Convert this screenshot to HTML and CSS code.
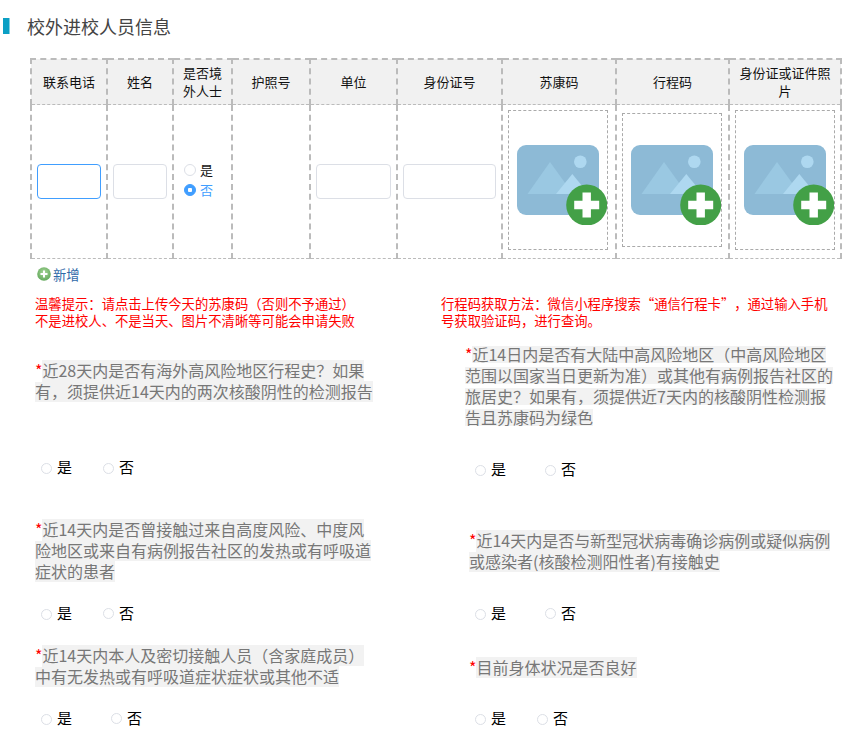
FILE: index.html
```html
<!DOCTYPE html>
<html lang="zh-CN">
<head>
<meta charset="utf-8">
<title>校外进校人员信息</title>
<link rel="stylesheet" href="styles.css">
</head>
<body>
<svg class="defs" width="0" height="0" aria-hidden="true">
  <symbol id="pic" viewBox="0 0 90 80">
    <rect x="0" y="0" width="82" height="70" rx="9" fill="#8dbad6"/>
    <path d="M10.5 49 33 17l23 32z" fill="#9ac8e2"/>
    <path d="M39 49l16.300-20L71.700 49z" fill="#aed8f0"/>
    <circle cx="63.300" cy="16.700" r="6.300" fill="#aed8f0"/>
    <circle cx="69.700" cy="60" r="20.500" fill="#43a047"/>
    <path d="M65.500 47.500h8.400v8.300h8.300v8.400h-8.300v8.300h-8.400v-8.300h-8.300v-8.400h8.300z" fill="#fff"/>
  </symbol>
</svg>

<h1 class="title">校外进校人员信息</h1>

<table class="grid">
  <thead>
    <tr>
      <th class="c1">联系电话</th>
      <th class="c2">姓名</th>
      <th class="c3">是否境<br>外人士</th>
      <th class="c4">护照号</th>
      <th class="c5">单位</th>
      <th class="c6">身份证号</th>
      <th class="c7">苏康码</th>
      <th class="c8">行程码</th>
      <th class="c9">身份证或证件照片</th>
    </tr>
  </thead>
  <tbody>
    <tr>
      <td class="pad"><input class="field focus" type="text"></td>
      <td class="pad"><input class="field" type="text"></td>
      <td>
        <div class="stack">
          <span class="radio small"><i class="dot"></i>是</span>
          <span class="radio small on"><i class="dot"></i>否</span>
        </div>
      </td>
      <td></td>
      <td class="pad"><input class="field" type="text"></td>
      <td class="pad"><input class="field" type="text"></td>
      <td><div class="upload"><svg class="pic"><use href="#pic"/></svg></div></td>
      <td><div class="upload short"><svg class="pic"><use href="#pic"/></svg></div></td>
      <td><div class="upload"><svg class="pic"><use href="#pic"/></svg></div></td>
    </tr>
  </tbody>
</table>

<div class="add">
  <svg class="add-icon" viewBox="0 0 14 14" aria-hidden="true">
    <defs><radialGradient id="g" cx="50%" cy="40%" r="60%"><stop offset="0" stop-color="#a9d79a"/><stop offset="1" stop-color="#63a95c"/></radialGradient></defs>
    <circle cx="7" cy="7" r="6.800" fill="url(#g)"/>
    <path d="M6 3.500h2V6h2.500v2H8v2.500H6V8H3.500V6H6z" fill="#fff"/>
  </svg>
  <span>新增</span>
</div>

<div class="notes">
  <p class="note left">温馨提示：请点击上传今天的苏康码（否则不予通过）<br>不是进校人、不是当天、图片不清晰等可能会申请失败</p>
  <p class="note right">行程码获取方法：微信小程序搜索“通信行程卡”，通过输入手机<br>号获取验证码，进行查询。</p>
</div>

<div class="questions">
  <div class="col col-left">
    <div class="q lq1"><span class="ln"><b>*</b>近28天内是否有海外高风险地区行程史？如果</span><span class="ln">有，须提供近14天内的两次核酸阴性的检测报告</span></div>
    <div class="answers lr1"><span class="radio"><i class="dot"></i>是</span><span class="radio gap62"><i class="dot"></i>否</span></div>
    <div class="q lq2"><span class="ln"><b>*</b>近14天内是否曾接触过来自高度风险、中度风</span><span class="ln">险地区或来自有病例报告社区的发热或有呼吸道</span><span class="ln">症状的患者</span></div>
    <div class="answers lr2"><span class="radio"><i class="dot"></i>是</span><span class="radio gap62"><i class="dot up"></i>否</span></div>
    <div class="q lq3"><span class="ln"><b>*</b>近14天内本人及密切接触人员（含家庭成员）</span><span class="ln">中有无发热或有呼吸道症状症状或其他不适</span></div>
    <div class="answers lr3"><span class="radio"><i class="dot"></i>是</span><span class="radio gap70"><i class="dot up"></i>否</span></div>
  </div>
  <div class="col col-right">
    <div class="q rq1"><span class="ln thin"><b>*</b>近14日内是否有大陆中高风险地区（中高风险地区</span><span class="ln thin">范围以国家当日更新为准）或其他有病例报告社区的</span><span class="ln thin">旅居史？如果有，须提供近7天内的核酸阴性检测报</span><span class="ln thin">告且苏康码为绿色</span></div>
    <div class="answers ra rr1"><span class="radio"><i class="dot"></i>是</span><span class="radio gap70"><i class="dot"></i>否</span></div>
    <div class="q rq2"><span class="ln"><b>*</b>近14天内是否与新型冠状病毒确诊病例或疑似病例</span><span class="ln">或感染者(核酸检测阳性者)有接触史</span></div>
    <div class="answers ra rr2"><span class="radio"><i class="dot"></i>是</span><span class="radio gap70"><i class="dot up"></i>否</span></div>
    <div class="q rq3"><span class="ln"><b>*</b>目前身体状况是否良好</span></div>
    <div class="answers ra rr3"><span class="radio"><i class="dot"></i>是</span><span class="radio gap62"><i class="dot"></i>否</span></div>
  </div>
</div>
</body>
</html>
```

FILE: styles.css
```css
html, body {
  margin: 0;
  padding: 0;
  height: 746px;
  overflow: hidden;
  background: #fff;
  font-family: "Noto Sans CJK SC", "Liberation Sans", sans-serif;
  text-spacing-trim: space-all;
}
.defs { position: absolute; }

.title {
  margin: 0 0 0 3px;
  padding: 15px 0 0 24px;
  height: 42px;
  box-sizing: border-box;
  font-size: 18px;
  font-weight: 400;
  line-height: 22px;
  color: #444;
  background: linear-gradient(#0b9fc4, #0b9fc4) no-repeat 0 18px / 6.500px 16px;
}

.grid {
  margin: 16px 0 0 30px;
  border-collapse: collapse;
  table-layout: fixed;
  width: 812px;
}
.grid th, .grid td {
  border: 2px dashed #bbb;
  padding: 0;
  text-align: center;
  vertical-align: middle;
}
.grid th {
  height: 44px;
  background: #f1f1f1;
  font-size: 13px;
  font-weight: 400;
  line-height: 18px;
  color: #111;
  border-bottom: 1px dashed #bbb;
}
.grid td {
  height: 153px;
  border-top: 1px dashed #bbb;
  border-bottom: 1px dashed #bbb;
}
.c1 { width: 74px; }
.c2 { width: 64px; }
.c3 { width: 57px; }
.c4 { width: 76px; }
.c5 { width: 85px; }
.c6 { width: 103px; }
.c7 { width: 112px; }
.c8 { width: 111px; }
.grid .c9 { width: 98px; padding: 0 6px; }

.grid .pad { padding: 0 5px; }
.field {
  display: block;
  width: 100%;
  height: 35px;
  box-sizing: border-box;
  border: 1px solid #dcdfe6;
  border-radius: 4px;
  background: #fff;
  outline: 0;
  padding: 0 8px;
}
.field.focus { border-color: #409eff; }

.upload {
  width: 100px;
  height: 140px;
  box-sizing: border-box;
  margin: -4px 0 0 5px;
  padding: 34px 0 0 8px;
  border: 1px dashed #aaa;
  text-align: left;
}
.upload.short { height: 134px; padding-top: 31px; }
.pic { display: block; width: 90px; height: 80px; }

.stack {
  display: flex;
  flex-direction: column;
  align-items: flex-start;
  padding: 0 0 4px 10px;
}
.radio {
  display: inline-flex;
  align-items: center;
  font-size: 15px;
  line-height: 20px;
  height: 20px;
  color: #000;
}
.radio.small { font-size: 13px; color: #111; }
.radio.on { color: #409eff; }
.dot {
  display: block;
  flex: none;
  width: 9px;
  height: 9px;
  border: 1.500px solid #dcdfe6;
  border-radius: 50%;
  background: #fff;
  margin-right: 5px;
  position: relative;
  top: 1px;
}
.dot.up { top: 0; }
.radio.small .dot { width: 10px; height: 10px; margin-right: 4px; top: 0; }
.radio.on .dot {
  background: radial-gradient(circle, #fff 0 2px, #409eff 2.500px);
  border-color: #409eff;
}

.add {
  display: flex;
  align-items: center;
  gap: 2px;
  margin: 5px 0 0 37px;
  height: 20px;
  font-size: 13.300px;
  color: #2f6aa8;
}
.add-icon { width: 14px; height: 14px; display: block; }

.notes {
  display: flex;
  margin-top: 11px;
}
.note {
  margin: 0;
  font-size: 13.330px;
  line-height: 17px;
  color: #f00;
  white-space: nowrap;
}
.note.left { width: 406px; margin-left: 35px; }

.questions { display: flex; }
.col { display: flex; flex-direction: column; }
.col-left { width: 430px; padding-left: 35px; box-sizing: border-box; }
.col-right { padding-left: 35px; }

.q {
  font-size: 16px;
  line-height: 21px;
  color: #777;
  white-space: nowrap;
}
.ln {
  display: block;
  width: fit-content;
  height: 21px;
  background: #f2f2f2;
}
.ln.thin {
  background: linear-gradient(#f2f2f2, #f2f2f2) no-repeat center / 100% 17px;
}
.ln b { color: #f00; font-weight: 400; background: #fff; }

.answers {
  display: flex;
  padding-left: 6px;
  height: 20px;
}
.answers.ra { padding-left: 10px; }
.gap62 { margin-left: 31px; }
.gap70 { margin-left: 39px; }

.lq1 { margin-top: 31px; }
.lr1 { margin-top: 55px; }
.lq2 { margin-top: 42px; }
.lr2 { margin-top: 21px; }
.lq3 { margin-top: 22px; }
.lr3 { margin-top: 21px; }

.rq1 { margin-top: 15px; }
.rr1 { margin-top: 31px; }
.rq2 { margin-top: 51px; padding-left: 4px; }
.rr2 { margin-top: 31px; }
.rq3 { margin-top: 34px; padding-left: 4px; }
.rr3 { margin-top: 30px; }
```
